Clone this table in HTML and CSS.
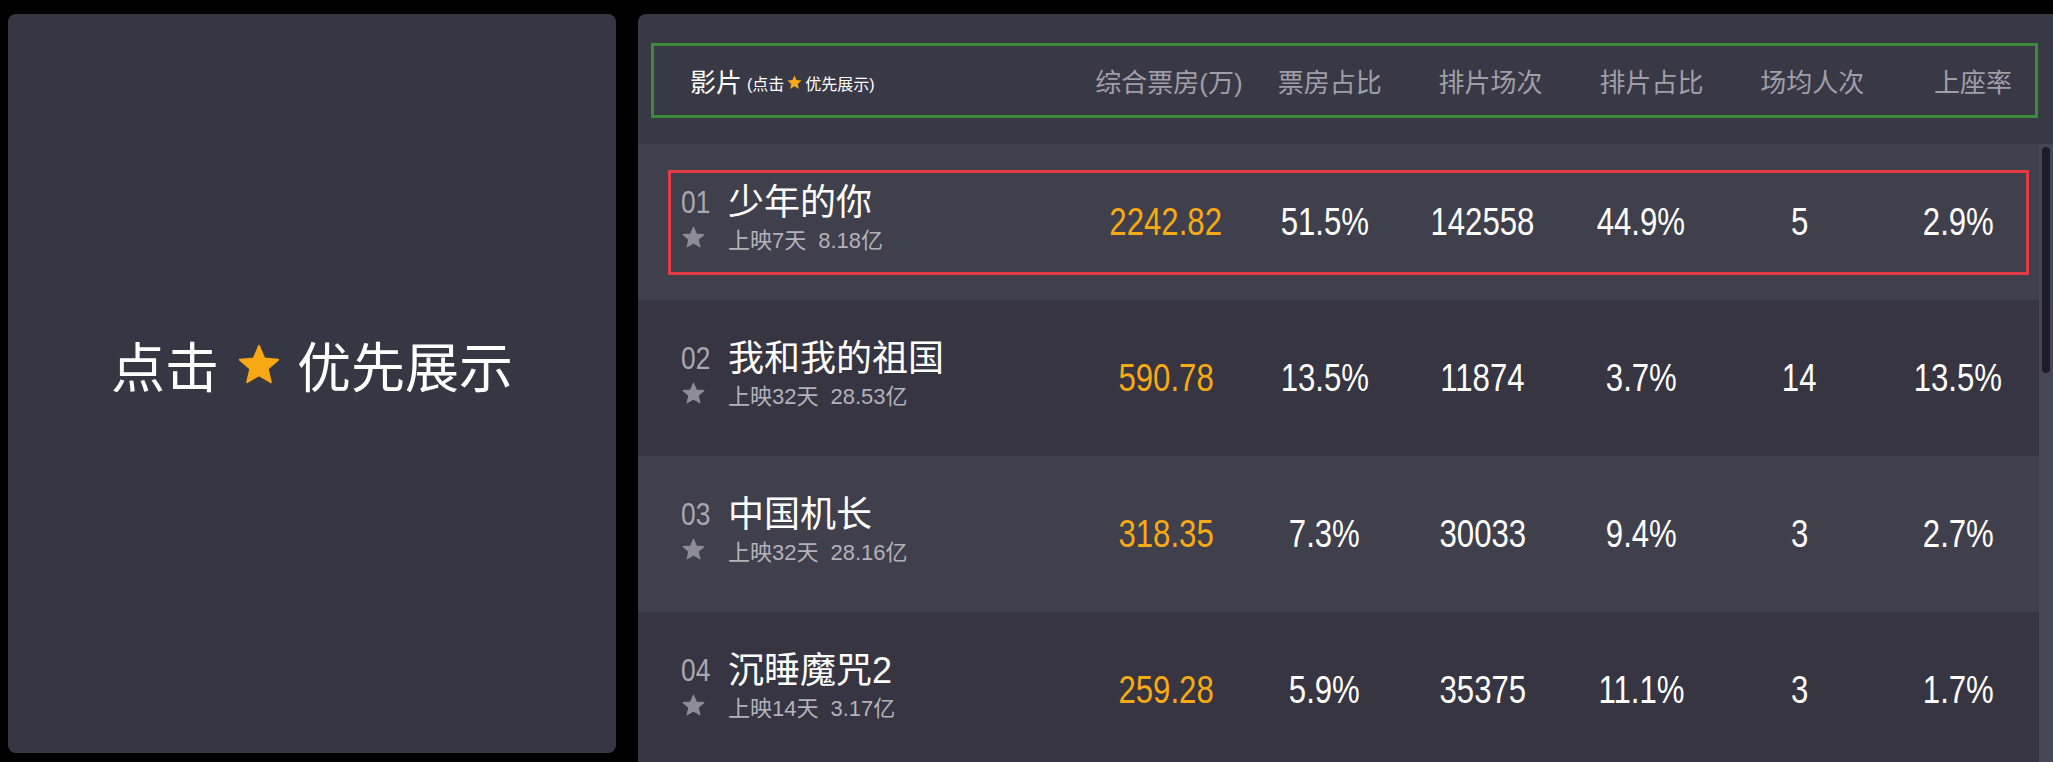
FILE: index.html
```html
<!DOCTYPE html>
<html lang="zh">
<head>
<meta charset="utf-8">
<title>票房排行</title>
<link rel="stylesheet" href="styles.css">
</head>
<body>
<div class="page">
  <aside class="hint-panel">
    <div class="hint-text">
      <span>点击</span>
      <svg class="star star-lg" viewBox="0 0 24 24"><path d="M12 17.27L18.18 21l-1.64-7.03L22 9.24l-7.19-.61L12 2 9.19 8.63 2 9.24l5.46 4.73L5.82 21z"/></svg>
      <span>优先展示</span>
    </div>
  </aside>

  <section class="board">
    <div class="board-head">
      <div class="head-row">
        <div class="head-movie">
          <span class="head-title">影片</span>
          <span class="head-note">(点击<svg class="star star-xs" viewBox="0 0 24 24"><path d="M12 17.27L18.18 21l-1.64-7.03L22 9.24l-7.19-.61L12 2 9.19 8.63 2 9.24l5.46 4.73L5.82 21z"/></svg>优先展示)</span>
        </div>
        <div class="head-cell"><span>综合票房(万)</span></div>
        <div class="head-cell"><span>票房占比</span></div>
        <div class="head-cell"><span>排片场次</span></div>
        <div class="head-cell"><span>排片占比</span></div>
        <div class="head-cell"><span>场均人次</span></div>
        <div class="head-cell"><span>上座率</span></div>
      </div>
    </div>

    <div class="board-body">
      <div class="rows">
        <div class="row row-light">
          <div class="row-inner is-pinned">
            <div class="movie">
              <span class="rank">01</span>
              <span class="name">少年的你</span>
              <svg class="star star-sm" viewBox="0 0 24 24"><path d="M12 17.27L18.18 21l-1.64-7.03L22 9.24l-7.19-.61L12 2 9.19 8.63 2 9.24l5.46 4.73L5.82 21z"/></svg>
              <span class="meta"><span>上映7天</span><span class="meta-sum">8.18亿</span></span>
            </div>
            <div class="cell cell-box"><span>2242.82</span></div>
            <div class="cell"><span>51.5%</span></div>
            <div class="cell"><span>142558</span></div>
            <div class="cell"><span>44.9%</span></div>
            <div class="cell"><span>5</span></div>
            <div class="cell"><span>2.9%</span></div>
          </div>
        </div>

        <div class="row row-dark">
          <div class="row-inner">
            <div class="movie">
              <span class="rank">02</span>
              <span class="name">我和我的祖国</span>
              <svg class="star star-sm" viewBox="0 0 24 24"><path d="M12 17.27L18.18 21l-1.64-7.03L22 9.24l-7.19-.61L12 2 9.19 8.63 2 9.24l5.46 4.73L5.82 21z"/></svg>
              <span class="meta"><span>上映32天</span><span class="meta-sum">28.53亿</span></span>
            </div>
            <div class="cell cell-box"><span>590.78</span></div>
            <div class="cell"><span>13.5%</span></div>
            <div class="cell"><span>11874</span></div>
            <div class="cell"><span>3.7%</span></div>
            <div class="cell"><span>14</span></div>
            <div class="cell"><span>13.5%</span></div>
          </div>
        </div>

        <div class="row row-light">
          <div class="row-inner">
            <div class="movie">
              <span class="rank">03</span>
              <span class="name">中国机长</span>
              <svg class="star star-sm" viewBox="0 0 24 24"><path d="M12 17.27L18.18 21l-1.64-7.03L22 9.24l-7.19-.61L12 2 9.19 8.63 2 9.24l5.46 4.73L5.82 21z"/></svg>
              <span class="meta"><span>上映32天</span><span class="meta-sum">28.16亿</span></span>
            </div>
            <div class="cell cell-box"><span>318.35</span></div>
            <div class="cell"><span>7.3%</span></div>
            <div class="cell"><span>30033</span></div>
            <div class="cell"><span>9.4%</span></div>
            <div class="cell"><span>3</span></div>
            <div class="cell"><span>2.7%</span></div>
          </div>
        </div>

        <div class="row row-dark">
          <div class="row-inner">
            <div class="movie">
              <span class="rank">04</span>
              <span class="name">沉睡魔咒2</span>
              <svg class="star star-sm" viewBox="0 0 24 24"><path d="M12 17.27L18.18 21l-1.64-7.03L22 9.24l-7.19-.61L12 2 9.19 8.63 2 9.24l5.46 4.73L5.82 21z"/></svg>
              <span class="meta"><span>上映14天</span><span class="meta-sum">3.17亿</span></span>
            </div>
            <div class="cell cell-box"><span>259.28</span></div>
            <div class="cell"><span>5.9%</span></div>
            <div class="cell"><span>35375</span></div>
            <div class="cell"><span>11.1%</span></div>
            <div class="cell"><span>3</span></div>
            <div class="cell"><span>1.7%</span></div>
          </div>
        </div>
      </div>
      <div class="scrollbar"><div class="thumb"></div></div>
    </div>
  </section>
</div>
</body>
</html>
```

FILE: styles.css
```css
html, body {
  margin: 0;
  height: 100%;
  background: #000;
  overflow: hidden;
}

body {
  font-family: "Liberation Sans", "Noto Sans CJK SC", sans-serif;
  color: #fff;
}

.page {
  display: flex;
  gap: 22px;
  padding: 14px 0 0 8px;
  box-sizing: border-box;
  height: 100vh;
}

/* left hint panel */
.hint-panel {
  flex: none;
  width: 608px;
  height: 739px;
  background: #373643;
  border-radius: 8px;
  display: flex;
  align-items: center;
  justify-content: center;
}

.hint-text {
  display: flex;
  align-items: center;
  padding-bottom: 36px;
  font-family: "Noto Sans CJK SC", sans-serif;
  font-size: 54px;
  line-height: 1.2;
  color: #fff;
}

.star {
  display: block;
  flex: none;
}

.star path {
  stroke-linejoin: round;
}

.star-lg {
  width: 46px;
  height: 46px;
  margin: 0 15px 0 17px;
  fill: #f7a815;
}

.star-lg path { stroke: #f7a815; stroke-width: 1; }

/* right board */
.board {
  flex: 1;
  min-width: 0;
  height: 790px;
  background: #393845;
  border-radius: 8px 0 0 0;
  display: flex;
  flex-direction: column;
}

.board-head {
  padding: 29px 15px 26px 13px;
}

.head-row {
  height: 75px;
  box-sizing: border-box;
  border: 3px solid #3b8b3d;
  display: grid;
  grid-template-columns: 1fr repeat(6, 124px);
  column-gap: 36.8px;
  align-items: center;
}

.head-movie {
  display: flex;
  align-items: center;
  padding-left: 36px;
}

.head-title {
  font-family: "Noto Sans CJK SC", sans-serif;
  font-size: 26px;
  color: #fff;
}

.head-note {
  display: flex;
  align-items: center;
  margin-left: 5px;
  margin-top: 4px;
  font-size: 16px;
  color: #fff;
  white-space: nowrap;
}

.star-xs {
  width: 17px;
  height: 17px;
  margin: 0 2px;
  fill: #f7a815;
}

.head-cell {
  display: flex;
  justify-content: center;
  font-size: 26px;
  color: #a09fa8;
  white-space: nowrap;
}

.board-body {
  flex: 1;
  display: flex;
  min-height: 0;
}

.rows {
  flex: 1;
  min-width: 0;
}

.row {
  height: 156px;
  box-sizing: border-box;
  padding: 26px 10px 25px 30px;
  display: flex;
}

.row-light { background: #403f4c; }
.row-dark { background: #363541; }

.row-inner {
  flex: 1;
  border: 3px solid transparent;
  display: grid;
  grid-template-columns: 1fr repeat(6, 130px);
  column-gap: 28.4px;
  align-items: center;
  padding: 0 3px 0 10px;
}

.row-inner.is-pinned {
  border-color: #e23b45;
}

.movie {
  display: grid;
  grid-template-columns: 47px auto;
  align-items: center;
  justify-content: start;
  padding-bottom: 7px;
}

.rank {
  display: inline-block;
  font-size: 31px;
  line-height: 44px;
  color: #a9a8b1;
  transform: scaleX(0.85);
  transform-origin: left center;
}

.name {
  font-size: 36px;
  line-height: 44px;
  color: #fff;
  white-space: nowrap;
}

.star-sm {
  width: 25px;
  height: 25px;
  margin-bottom: 7px;
  fill: #8d8c97;
}

.star-sm path { stroke: #8d8c97; stroke-width: 1; }

.meta {
  display: flex;
  font-size: 22px;
  line-height: 30px;
  color: #b3b2ba;
  white-space: nowrap;
}

.meta-sum {
  margin-left: 12px;
}

.cell {
  display: flex;
  justify-content: center;
  font-size: 38px;
  color: #fff;
  white-space: nowrap;
}

.cell span {
  display: inline-block;
  transform: scaleX(0.82);
}

.cell-box {
  color: #f7aa14;
}

/* scrollbar */
.scrollbar {
  flex: none;
  width: 14px;
  background: #474654;
}

.thumb {
  width: 8px;
  height: 226px;
  margin: 3px 0 0 3px;
  border-radius: 4px;
  background: #1e1d28;
}
```
